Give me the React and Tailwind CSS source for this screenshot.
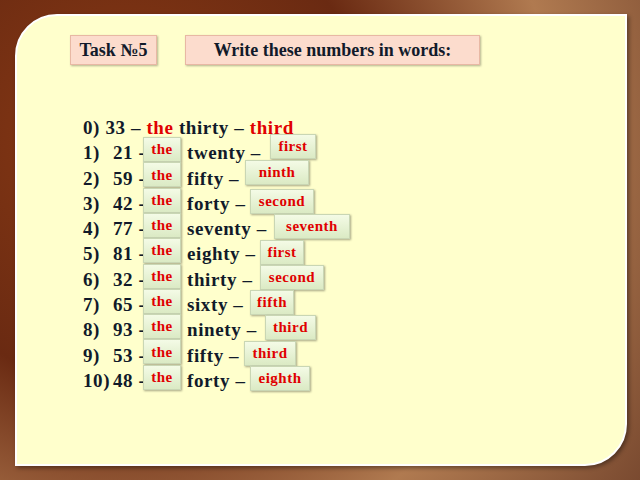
const rows = [
  ["1)", "21", "twenty", "first", 270, 46, 134],
  ["2)", "59", "fifty", "ninth", 245, 64, 160],
  ["3)", "42", "forty", "second", 250, 64, 189],
  ["4)", "77", "seventy", "seventh", 274, 76, 214],
  ["5)", "81", "eighty", "first", 260, 44, 240],
  ["6)", "32", "thirty", "second", 260, 64, 265],
  ["7)", "65", "sixty", "fifth", 250, 44, 290],
  ["8)", "93", "ninety", "third", 265, 51, 315],
  ["9)", "53", "fifty", "third", 244, 52, 341],
  ["10)", "48", "forty", "eighth", 250, 60, 366],
];
const box = "absolute h-[25px] flex items-center justify-center bg-gradient-to-b from-[#f4fbe6] to-[#dbeac4] border border-[#c9d6b4] shadow-[1px_1px_2px_rgba(0,0,0,0.35)] text-[#e00000] text-[15px] font-bold tracking-[0.5px]";
export default function App() {
  return (
    <div className="w-[640px] h-[480px] bg-[radial-gradient(circle_at_20%_30%,#8a3a14,#6a2a12_40%,#b07a50_70%,#7a4a30)] pt-[14px] pl-[15px]" style={{ fontFamily: '"Liberation Serif", serif' }}>
      <div className="relative w-[612px] h-[452px] bg-[#ffffcc] rounded-tl-[42px] rounded-br-[42px] border-2 border-white shadow-[2px_2px_4px_rgba(0,0,0,0.4)] text-[#111a2a] font-bold">
        <div className="flex gap-[28px] ml-[53px] mt-[19px]">
          <div className="h-[30px] w-[87px] flex items-center justify-center bg-[#fcdccd] border border-[#e8b8a4] shadow-[1px_1px_2px_rgba(0,0,0,0.3)] text-[18px]">Task №5</div>
          <div className="h-[30px] w-[295px] flex items-center justify-center bg-[#fcdccd] border border-[#e8b8a4] shadow-[1px_1px_2px_rgba(0,0,0,0.3)] text-[18px]">Write these numbers in words:</div>
        </div>
        <div className="mt-[50px] ml-[66px] text-[19px] leading-[25.3px] tracking-[0.6px]">
          <div>0) 33 – <span className="text-[#e00000]">the</span> thirty – <span className="text-[#e00000]">third</span></div>
          {rows.map((r, i) => (
            <div key={i} className="relative flex h-[25.3px]">
              <span className="w-[30px]">{r[0]}</span>
              <span>{r[1]} -</span>
              <span className="absolute left-[104px]">{r[2]} –</span>
            </div>
          ))}
        </div>
        {rows.map((r, i) => (
          <div key={i}>
            <div className={box + " w-[38px]"} style={{ left: 126, top: 121 + 25.3 * i }}>the</div>
            <div className={box} style={{ left: r[4] - 17, width: r[5], top: r[6] - 16 }}>{r[3]}</div>
          </div>
        ))}
      </div>
    </div>
  );
}
